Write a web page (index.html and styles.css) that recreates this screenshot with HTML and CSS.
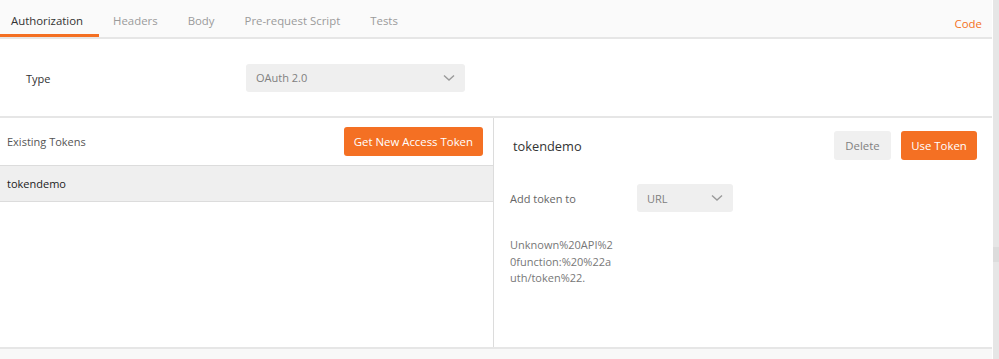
FILE: index.html
```html
<!DOCTYPE html>
<html lang="en">
<head>
    <meta charset="UTF-8">
    <title>Authorization</title>
    <link rel="stylesheet" href="styles.css">
</head>
<body>
    <div class="page">
        <div class="main">
            <!-- Tab bar -->
            <div class="tabs">
                <span class="tab active">Authorization</span>
                <span class="tab">Headers</span>
                <span class="tab">Body</span>
                <span class="tab">Pre-request Script</span>
                <span class="tab">Tests</span>
                <span class="code-link">Code</span>
            </div>

            <!-- Auth type -->
            <div class="type-row">
                <span class="type-label">Type</span>
                <div class="select type-select">
                    <span>OAuth 2.0</span>
                    <svg class="chevron" width="12" height="8" viewBox="0 0 12 8"><path d="M1 1.5 L6 6 L11 1.5" fill="none" stroke="#9a9a9a" stroke-width="1.4"/></svg>
                </div>
            </div>

            <div class="panels">
                <!-- Token list -->
                <div class="token-list">
                    <div class="list-header">
                        <span class="list-title">Existing Tokens</span>
                        <button class="btn btn-orange">Get New Access Token</button>
                    </div>
                    <div class="token-item">tokendemo</div>
                </div>

                <!-- Token detail -->
                <div class="token-detail">
                    <div class="detail-header">
                        <span class="detail-name">tokendemo</span>
                        <div class="detail-actions">
                            <button class="btn btn-grey">Delete</button>
                            <button class="btn btn-orange">Use Token</button>
                        </div>
                    </div>
                    <div class="add-row">
                        <span class="add-label">Add token to</span>
                        <div class="select url-select">
                            <span>URL</span>
                            <svg class="chevron" width="12" height="8" viewBox="0 0 12 8"><path d="M1 1.5 L6 6 L11 1.5" fill="none" stroke="#9a9a9a" stroke-width="1.4"/></svg>
                        </div>
                    </div>
                    <div class="token-error">Unknown%20API%20function:%20%22auth/token%22.</div>
                </div>
            </div>
            <div class="footer"></div>
        </div>
        <div class="scrollbar"><div class="thumb"></div></div>
    </div>
</body>
</html>
```

FILE: styles.css
```css
body {
    margin: 0;
    font-family: "Open Sans", Arial, sans-serif;
    font-size: 11px;
    color: #333;
    background: #fff;
}
.page {
    display: flex;
    height: 359px;
    overflow: hidden;
}
.main {
    width: 992px;
    display: flex;
    flex-direction: column;
}
.scrollbar {
    width: 6px;
    margin-left: 1px;
    background: #e6e6e6;
    padding-top: 247px;
}
.thumb {
    height: 15px;
    background: #dcdcdc;
}
.tabs {
    display: flex;
    align-items: stretch;
    height: 37px;
    background: #fafafa;
    border-bottom: 2px solid #e6e6e6;
    box-sizing: content-box;
}
.tab {
    display: flex;
    align-items: center;
    padding: 7px 16px 0 11px;
    margin-right: 3px;
    font-size: 11.4px;
    color: #9a9a9a;
    border-bottom: 3px solid transparent;
}
.tab.active {
    color: #333;
    border-bottom-color: #f47023;
}
.code-link {
    margin-left: auto;
    display: flex;
    align-items: center;
    padding: 10px 10px 0 0;
    color: #f47023;
    font-size: 11.4px;
}
.type-row {
    display: flex;
    align-items: center;
    height: 77px;
    padding-left: 26px;
    border-bottom: 2px solid #e6e6e6;
}
.type-label {
    width: 220px;
    padding-top: 2px;
}
.select {
    display: flex;
    align-items: center;
    justify-content: space-between;
    height: 28px;
    background: #efefef;
    border-radius: 3px;
    color: #808080;
    box-sizing: border-box;
    padding: 0 10px;
}
.type-select {
    width: 219px;
}
.url-select {
    width: 96px;
}
.panels {
    display: flex;
    height: 229px;
}
.token-list {
    width: 493px;
    border-right: 1px solid #dcdcdc;
}
.list-header {
    display: flex;
    align-items: center;
    justify-content: space-between;
    height: 47px;
    padding: 0 10px 0 7px;
    border-bottom: 1px solid #dcdcdc;
}
.list-title {
    color: #555;
}
.token-item {
    height: 35px;
    line-height: 35px;
    padding-left: 7px;
    background: #efefef;
    border-bottom: 1px solid #dcdcdc;
    color: #222;
}
.btn {
    height: 29px;
    border: none;
    border-radius: 3px;
    font-family: "Open Sans", Arial, sans-serif;
    font-size: 11.4px;
    padding: 0 10px;
    cursor: pointer;
}
.btn-orange {
    background: #f47023;
    color: #fff;
}
.btn-grey {
    background: #f0f0f0;
    color: #808080;
    width: 57px;
}
.token-detail {
    flex: 1;
    padding: 0 15px 0 16px;
}
.detail-header {
    display: flex;
    align-items: center;
    justify-content: space-between;
    margin-top: 13px;
    padding-left: 3px;
}
.detail-name {
    font-size: 12.8px;
}
.detail-actions {
    display: flex;
    gap: 10px;
}
.detail-actions .btn-orange {
    width: 76px;
    padding: 0;
}
.add-row {
    display: flex;
    align-items: center;
    margin-top: 24px;
}
.add-label {
    width: 127px;
    color: #666;
}
.token-error {
    margin-top: 25px;
    width: 103px;
    word-break: break-all;
    line-height: 16.5px;
    color: #777;
}
.footer {
    flex: 1;
    background: #f8f8f8;
    border-top: 2px solid #e6e6e6;
}
```
